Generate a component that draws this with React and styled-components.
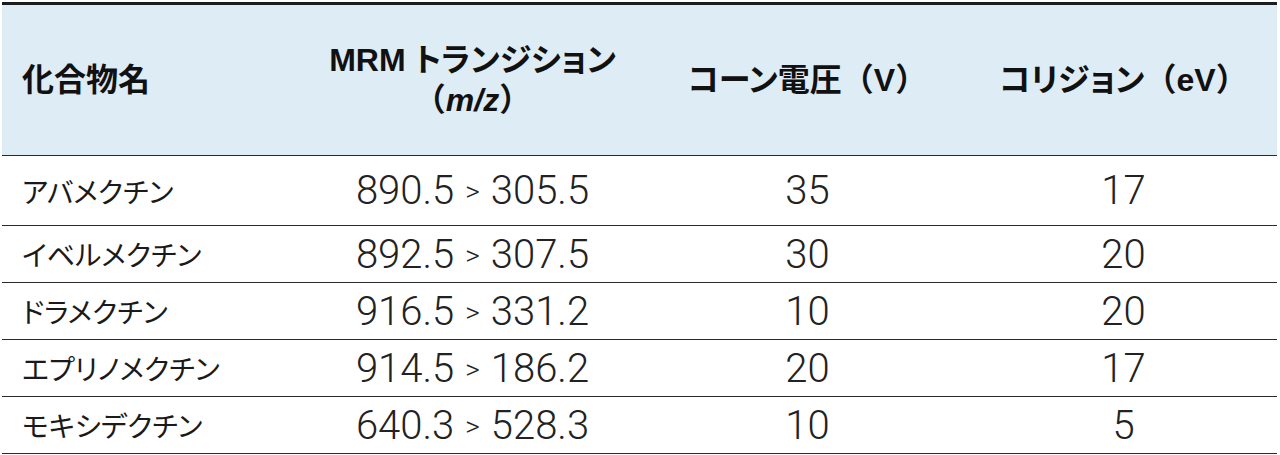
import React from "react";
import styled, { createGlobalStyle } from "styled-components";

const Global = createGlobalStyle`
  html, body { margin: 0; padding: 0; background: #ffffff; }
  body { font-family: "Noto Sans CJK JP", sans-serif; color: #1a1a1a; }
`;

const Wrap = styled.div`
  padding: 2px 3px 0 2px;
`;

const Table = styled.div`
  display: grid;
  grid-template-columns: 298px 345px 325px 1fr;
  border-top: 3px solid #1c1c1c;
`;

const HeadCell = styled.div`
  background: #deecf5;
  height: 150px;
  border-bottom: 1px solid #2a2a2a;
  display: flex;
  flex-direction: column;
  align-items: ${(p) => (p.$left ? "flex-start" : "center")};
  justify-content: center;
  padding-left: ${(p) => (p.$left ? "20px" : "0")};
  font-family: "Liberation Sans", "Noto Sans CJK JP", sans-serif;
  font-weight: 700;
  font-size: 32px;
  line-height: 40px;
  color: #111;
  text-align: center;
`;

const HeadLine = styled.span`
  display: block;
  white-space: nowrap;
`;

const Kana = styled.span`
  font-feature-settings: "palt" 1;
`;

const Ital = styled.i`
  font-style: italic;
`;

const Cell = styled.div`
  height: ${(p) => (p.$first ? "69px" : "56px")};
  border-bottom: 1px solid #2a2a2a;
  display: flex;
  align-items: center;
  justify-content: ${(p) => (p.$left ? "flex-start" : "center")};
  padding-left: ${(p) => (p.$left ? "20px" : "0")};
  white-space: nowrap;
`;

const Name = styled.span`
  font-family: "Noto Sans CJK JP", sans-serif;
  font-weight: 400;
  font-size: 28px;
  font-feature-settings: "palt" 1;
  color: #1a1a1a;
`;

const Num = styled.span`
  font-family: "Roboto", "Liberation Sans", sans-serif;
  font-weight: 300;
  font-size: 40px;
  color: #222;
`;

const Gt = styled.span`
  display: inline-block;
  margin: 0 11px;
  font-size: 28px;
  vertical-align: 3px;
`;

const rows = [
  ["アバメクチン", "890.5", "305.5", "35", "17"],
  ["イベルメクチン", "892.5", "307.5", "30", "20"],
  ["ドラメクチン", "916.5", "331.2", "10", "20"],
  ["エプリノメクチン", "914.5", "186.2", "20", "17"],
  ["モキシデクチン", "640.3", "528.3", "10", "5"],
];

export default function App() {
  return (
    <>
      <Global />
      <Wrap>
        <Table>
          <HeadCell $left>
            <HeadLine>化合物名</HeadLine>
          </HeadCell>
          <HeadCell>
            <HeadLine>
              MRM <Kana>トランジション</Kana>
            </HeadLine>
            <HeadLine>
              （<Ital>m/z</Ital>）
            </HeadLine>
          </HeadCell>
          <HeadCell>
            <HeadLine>
              <Kana>コーン</Kana>電圧（V）
            </HeadLine>
          </HeadCell>
          <HeadCell>
            <HeadLine>
              <Kana>コリジョン</Kana>（eV）
            </HeadLine>
          </HeadCell>
          {rows.map((r, i) => (
            <React.Fragment key={r[0]}>
              <Cell $left $first={i === 0}>
                <Name>{r[0]}</Name>
              </Cell>
              <Cell $first={i === 0}>
                <Num>
                  {r[1]}
                  <Gt>&gt;</Gt>
                  {r[2]}
                </Num>
              </Cell>
              <Cell $first={i === 0}>
                <Num>{r[3]}</Num>
              </Cell>
              <Cell $first={i === 0}>
                <Num>{r[4]}</Num>
              </Cell>
            </React.Fragment>
          ))}
        </Table>
      </Wrap>
    </>
  );
}
